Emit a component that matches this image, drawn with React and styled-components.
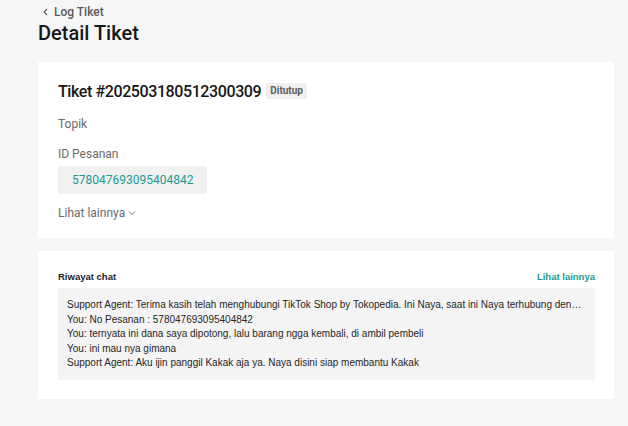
import React from "react";
import styled, { createGlobalStyle } from "styled-components";

const Global = createGlobalStyle`
  html, body {
    margin: 0;
    padding: 0;
    background: #f6f6f6;
    font-family: Roboto, "Noto Sans", sans-serif;
  }
`

const Page = styled.div`
  width: 628px;
  height: 426px;
  overflow: hidden;
  padding: 4px 14px 0 38px;
  box-sizing: border-box;
  display: flex;
  flex-direction: column;
`

const Back = styled.a`
  display: flex;
  align-items: center;
  gap: 5px;
  margin-left: 4px;
  height: 16px;
  font-size: 12px;
  font-weight: 500;
  color: #5a5a5a;
  text-decoration: none;
`

const Title = styled.h1`
  margin: 0;
  font-size: 20px;
  font-weight: 500;
  color: #161616;
  line-height: 26px;
`

const Card = styled.div`
  background: #fff;
  margin-top: ${p => p.$top}px;
  padding: ${p => p.$pad};
  display: flex;
  flex-direction: column;
`

const TicketHead = styled.div`
  display: flex;
  align-items: center;
  gap: 5px;
  height: 22px;
`

const TicketNo = styled.span`
  font-size: 16px;
  font-weight: 500;
  letter-spacing: -0.4px;
  color: #161616;
`

const Badge = styled.span`
  background: #efefef;
  color: #606060;
  font-size: 10px;
  font-weight: 700;
  line-height: 12px;
  padding: 2px 4px;
  border-radius: 2px;
`

const Label = styled.div`
  font-size: 12px;
  color: #6a6a6a;
  margin-top: ${p => p.$top}px;
  line-height: 16px;
`

const IdBox = styled.div`
  align-self: flex-start;
  background: #f1f1f1;
  color: #1b9a93;
  font-size: 12px;
  padding: 6px 14px;
  line-height: 16px;
  margin-top: 4px;
  border-radius: 2px;
`

const More = styled.div`
  display: flex;
  align-items: center;
  gap: 3px;
  font-size: 12px;
  color: #6a6a6a;
  margin-top: 11px;
  line-height: 16px;
`

const ChatHead = styled.div`
  display: flex;
  justify-content: space-between;
  align-items: center;
  font-family: "Liberation Sans", Arial, sans-serif;
  font-size: 9.5px;
  font-weight: 700;
  height: 16px;
`

const ChatTitle = styled.span`
  color: #1e1e1e;
`

const ChatLink = styled.a`
  color: #1b9a93;
  text-decoration: none;
`

const ChatBox = styled.div`
  margin-top: 4px;
  background: #f4f4f4;
  padding: 10px 9px 9px;
  font-family: "Liberation Sans", Arial, sans-serif;
  font-size: 10px;
  color: #262626;
`

const ChatLine = styled.div`
  line-height: 14.5px;
  white-space: nowrap;
  overflow: hidden;
  text-overflow: ellipsis;
`

const lines = [
  "Support Agent: Terima kasih telah menghubungi TikTok Shop by Tokopedia. Ini Naya, saat ini Naya terhubung dengan Kakak, ada yang bisa Naya bantu?",
  "You: No Pesanan : 578047693095404842",
  "You: ternyata ini dana saya dipotong, lalu barang ngga kembali, di ambil pembeli",
  "You: ini mau nya gimana",
  "Support Agent: Aku ijin panggil Kakak aja ya. Naya disini siap membantu Kakak",
];

export default function App() {
  return (
    <Page>
      <Global />
      <Back href="#">
        <svg width="7" height="8" viewBox="0 0 7 8">
          <path d="M5 1 L2 4 L5 7" fill="none" stroke="#5a5a5a" strokeWidth="1.1" />
        </svg>
        Log Tiket
      </Back>
      <Title>Detail Tiket</Title>
      <Card $top={16} $pad="18px 20px 17px 20px">
        <TicketHead>
          <TicketNo>Tiket #202503180512300309</TicketNo>
          <Badge>Ditutup</Badge>
        </TicketHead>
        <Label $top={14}>Topik</Label>
        <Label $top={14}>ID Pesanan</Label>
        <IdBox>578047693095404842</IdBox>
        <More>
          Lihat lainnya
          <svg width="8" height="6" viewBox="0 0 8 6">
            <path d="M1 1.5 L4 4.5 L7 1.5" fill="none" stroke="#6a6a6a" strokeWidth="1" />
          </svg>
        </More>
      </Card>
      <Card $top={13} $pad="17px 19px 19px 20px">
        <ChatHead>
          <ChatTitle>Riwayat chat</ChatTitle>
          <ChatLink href="#">Lihat lainnya</ChatLink>
        </ChatHead>
        <ChatBox>
          {lines.map((l, i) => (
            <ChatLine key={i}>{l}</ChatLine>
          ))}
        </ChatBox>
      </Card>
    </Page>
  );
}
